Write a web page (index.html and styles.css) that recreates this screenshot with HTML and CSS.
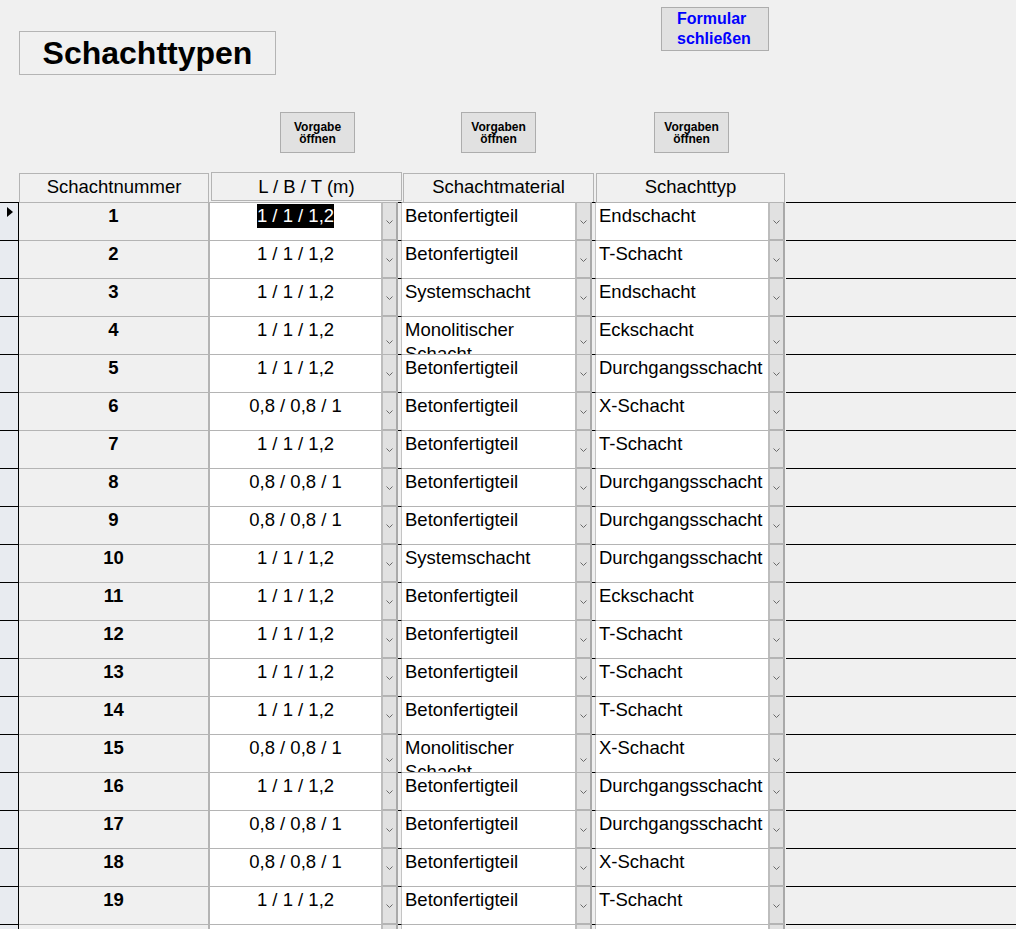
FILE: index.html
```html
<!DOCTYPE html>
<html lang="de">
<head>
<meta charset="utf-8">
<title>Schachttypen</title>
<link rel="stylesheet" href="styles.css">
</head>
<body>
<div class="topbar">
  <div class="title">Schachttypen</div>
  <div class="close-btn">Formular<br>schließen</div>
</div>
<div class="btnrow">
  <div class="vbtn"><span>Vorgabe</span><span>öffnen</span></div>
  <div class="vbtn vbtn-mat"><span>Vorgaben</span><span>öffnen</span></div>
  <div class="vbtn vbtn-typ"><span>Vorgaben</span><span>öffnen</span></div>
</div>
<div class="hdr">
  <div class="h h-num">Schachtnummer</div>
  <div class="h h-lbt">L / B / T (m)</div>
  <div class="h h-mat">Schachtmaterial</div>
  <div class="h h-typ">Schachttyp</div>
</div>

<div class="row">
  <div class="sel"><svg class="cur" width="6" height="10" viewBox="0 0 6 10"><polygon points="0,0 6,5 0,10" fill="#000"/></svg></div>
  <div class="num">1</div>
  <div class="combo"><div class="txt c"><span class="hl">1 / 1 / 1,2</span></div><div class="dd"><svg width="7" height="4"><polyline points="0.5,0.5 3.5,3.5 6.5,0.5" fill="none" stroke="#6a6a6a"/></svg></div><div class="gap"></div></div>
  <div class="combo"><div class="txt">Betonfertigteil</div><div class="dd"><svg width="7" height="4"><polyline points="0.5,0.5 3.5,3.5 6.5,0.5" fill="none" stroke="#6a6a6a"/></svg></div><div class="gap"></div></div>
  <div class="combo"><div class="txt">Endschacht</div><div class="dd"><svg width="7" height="4"><polyline points="0.5,0.5 3.5,3.5 6.5,0.5" fill="none" stroke="#6a6a6a"/></svg></div></div>
  <div class="rest"></div>
</div>
<div class="row">
  <div class="sel"></div>
  <div class="num">2</div>
  <div class="combo"><div class="txt c">1 / 1 / 1,2</div><div class="dd"><svg width="7" height="4"><polyline points="0.5,0.5 3.5,3.5 6.5,0.5" fill="none" stroke="#6a6a6a"/></svg></div><div class="gap"></div></div>
  <div class="combo"><div class="txt">Betonfertigteil</div><div class="dd"><svg width="7" height="4"><polyline points="0.5,0.5 3.5,3.5 6.5,0.5" fill="none" stroke="#6a6a6a"/></svg></div><div class="gap"></div></div>
  <div class="combo"><div class="txt">T-Schacht</div><div class="dd"><svg width="7" height="4"><polyline points="0.5,0.5 3.5,3.5 6.5,0.5" fill="none" stroke="#6a6a6a"/></svg></div></div>
  <div class="rest"></div>
</div>
<div class="row">
  <div class="sel"></div>
  <div class="num">3</div>
  <div class="combo"><div class="txt c">1 / 1 / 1,2</div><div class="dd"><svg width="7" height="4"><polyline points="0.5,0.5 3.5,3.5 6.5,0.5" fill="none" stroke="#6a6a6a"/></svg></div><div class="gap"></div></div>
  <div class="combo"><div class="txt">Systemschacht</div><div class="dd"><svg width="7" height="4"><polyline points="0.5,0.5 3.5,3.5 6.5,0.5" fill="none" stroke="#6a6a6a"/></svg></div><div class="gap"></div></div>
  <div class="combo"><div class="txt">Endschacht</div><div class="dd"><svg width="7" height="4"><polyline points="0.5,0.5 3.5,3.5 6.5,0.5" fill="none" stroke="#6a6a6a"/></svg></div></div>
  <div class="rest"></div>
</div>
<div class="row">
  <div class="sel"></div>
  <div class="num">4</div>
  <div class="combo"><div class="txt c">1 / 1 / 1,2</div><div class="dd"><svg width="7" height="4"><polyline points="0.5,0.5 3.5,3.5 6.5,0.5" fill="none" stroke="#6a6a6a"/></svg></div><div class="gap"></div></div>
  <div class="combo"><div class="txt">Monolitischer Schacht</div><div class="dd"><svg width="7" height="4"><polyline points="0.5,0.5 3.5,3.5 6.5,0.5" fill="none" stroke="#6a6a6a"/></svg></div><div class="gap"></div></div>
  <div class="combo"><div class="txt">Eckschacht</div><div class="dd"><svg width="7" height="4"><polyline points="0.5,0.5 3.5,3.5 6.5,0.5" fill="none" stroke="#6a6a6a"/></svg></div></div>
  <div class="rest"></div>
</div>
<div class="row">
  <div class="sel"></div>
  <div class="num">5</div>
  <div class="combo"><div class="txt c">1 / 1 / 1,2</div><div class="dd"><svg width="7" height="4"><polyline points="0.5,0.5 3.5,3.5 6.5,0.5" fill="none" stroke="#6a6a6a"/></svg></div><div class="gap"></div></div>
  <div class="combo"><div class="txt">Betonfertigteil</div><div class="dd"><svg width="7" height="4"><polyline points="0.5,0.5 3.5,3.5 6.5,0.5" fill="none" stroke="#6a6a6a"/></svg></div><div class="gap"></div></div>
  <div class="combo"><div class="txt">Durchgangsschacht</div><div class="dd"><svg width="7" height="4"><polyline points="0.5,0.5 3.5,3.5 6.5,0.5" fill="none" stroke="#6a6a6a"/></svg></div></div>
  <div class="rest"></div>
</div>
<div class="row">
  <div class="sel"></div>
  <div class="num">6</div>
  <div class="combo"><div class="txt c">0,8 / 0,8 / 1</div><div class="dd"><svg width="7" height="4"><polyline points="0.5,0.5 3.5,3.5 6.5,0.5" fill="none" stroke="#6a6a6a"/></svg></div><div class="gap"></div></div>
  <div class="combo"><div class="txt">Betonfertigteil</div><div class="dd"><svg width="7" height="4"><polyline points="0.5,0.5 3.5,3.5 6.5,0.5" fill="none" stroke="#6a6a6a"/></svg></div><div class="gap"></div></div>
  <div class="combo"><div class="txt">X-Schacht</div><div class="dd"><svg width="7" height="4"><polyline points="0.5,0.5 3.5,3.5 6.5,0.5" fill="none" stroke="#6a6a6a"/></svg></div></div>
  <div class="rest"></div>
</div>
<div class="row">
  <div class="sel"></div>
  <div class="num">7</div>
  <div class="combo"><div class="txt c">1 / 1 / 1,2</div><div class="dd"><svg width="7" height="4"><polyline points="0.5,0.5 3.5,3.5 6.5,0.5" fill="none" stroke="#6a6a6a"/></svg></div><div class="gap"></div></div>
  <div class="combo"><div class="txt">Betonfertigteil</div><div class="dd"><svg width="7" height="4"><polyline points="0.5,0.5 3.5,3.5 6.5,0.5" fill="none" stroke="#6a6a6a"/></svg></div><div class="gap"></div></div>
  <div class="combo"><div class="txt">T-Schacht</div><div class="dd"><svg width="7" height="4"><polyline points="0.5,0.5 3.5,3.5 6.5,0.5" fill="none" stroke="#6a6a6a"/></svg></div></div>
  <div class="rest"></div>
</div>
<div class="row">
  <div class="sel"></div>
  <div class="num">8</div>
  <div class="combo"><div class="txt c">0,8 / 0,8 / 1</div><div class="dd"><svg width="7" height="4"><polyline points="0.5,0.5 3.5,3.5 6.5,0.5" fill="none" stroke="#6a6a6a"/></svg></div><div class="gap"></div></div>
  <div class="combo"><div class="txt">Betonfertigteil</div><div class="dd"><svg width="7" height="4"><polyline points="0.5,0.5 3.5,3.5 6.5,0.5" fill="none" stroke="#6a6a6a"/></svg></div><div class="gap"></div></div>
  <div class="combo"><div class="txt">Durchgangsschacht</div><div class="dd"><svg width="7" height="4"><polyline points="0.5,0.5 3.5,3.5 6.5,0.5" fill="none" stroke="#6a6a6a"/></svg></div></div>
  <div class="rest"></div>
</div>
<div class="row">
  <div class="sel"></div>
  <div class="num">9</div>
  <div class="combo"><div class="txt c">0,8 / 0,8 / 1</div><div class="dd"><svg width="7" height="4"><polyline points="0.5,0.5 3.5,3.5 6.5,0.5" fill="none" stroke="#6a6a6a"/></svg></div><div class="gap"></div></div>
  <div class="combo"><div class="txt">Betonfertigteil</div><div class="dd"><svg width="7" height="4"><polyline points="0.5,0.5 3.5,3.5 6.5,0.5" fill="none" stroke="#6a6a6a"/></svg></div><div class="gap"></div></div>
  <div class="combo"><div class="txt">Durchgangsschacht</div><div class="dd"><svg width="7" height="4"><polyline points="0.5,0.5 3.5,3.5 6.5,0.5" fill="none" stroke="#6a6a6a"/></svg></div></div>
  <div class="rest"></div>
</div>
<div class="row">
  <div class="sel"></div>
  <div class="num">10</div>
  <div class="combo"><div class="txt c">1 / 1 / 1,2</div><div class="dd"><svg width="7" height="4"><polyline points="0.5,0.5 3.5,3.5 6.5,0.5" fill="none" stroke="#6a6a6a"/></svg></div><div class="gap"></div></div>
  <div class="combo"><div class="txt">Systemschacht</div><div class="dd"><svg width="7" height="4"><polyline points="0.5,0.5 3.5,3.5 6.5,0.5" fill="none" stroke="#6a6a6a"/></svg></div><div class="gap"></div></div>
  <div class="combo"><div class="txt">Durchgangsschacht</div><div class="dd"><svg width="7" height="4"><polyline points="0.5,0.5 3.5,3.5 6.5,0.5" fill="none" stroke="#6a6a6a"/></svg></div></div>
  <div class="rest"></div>
</div>
<div class="row">
  <div class="sel"></div>
  <div class="num">11</div>
  <div class="combo"><div class="txt c">1 / 1 / 1,2</div><div class="dd"><svg width="7" height="4"><polyline points="0.5,0.5 3.5,3.5 6.5,0.5" fill="none" stroke="#6a6a6a"/></svg></div><div class="gap"></div></div>
  <div class="combo"><div class="txt">Betonfertigteil</div><div class="dd"><svg width="7" height="4"><polyline points="0.5,0.5 3.5,3.5 6.5,0.5" fill="none" stroke="#6a6a6a"/></svg></div><div class="gap"></div></div>
  <div class="combo"><div class="txt">Eckschacht</div><div class="dd"><svg width="7" height="4"><polyline points="0.5,0.5 3.5,3.5 6.5,0.5" fill="none" stroke="#6a6a6a"/></svg></div></div>
  <div class="rest"></div>
</div>
<div class="row">
  <div class="sel"></div>
  <div class="num">12</div>
  <div class="combo"><div class="txt c">1 / 1 / 1,2</div><div class="dd"><svg width="7" height="4"><polyline points="0.5,0.5 3.5,3.5 6.5,0.5" fill="none" stroke="#6a6a6a"/></svg></div><div class="gap"></div></div>
  <div class="combo"><div class="txt">Betonfertigteil</div><div class="dd"><svg width="7" height="4"><polyline points="0.5,0.5 3.5,3.5 6.5,0.5" fill="none" stroke="#6a6a6a"/></svg></div><div class="gap"></div></div>
  <div class="combo"><div class="txt">T-Schacht</div><div class="dd"><svg width="7" height="4"><polyline points="0.5,0.5 3.5,3.5 6.5,0.5" fill="none" stroke="#6a6a6a"/></svg></div></div>
  <div class="rest"></div>
</div>
<div class="row">
  <div class="sel"></div>
  <div class="num">13</div>
  <div class="combo"><div class="txt c">1 / 1 / 1,2</div><div class="dd"><svg width="7" height="4"><polyline points="0.5,0.5 3.5,3.5 6.5,0.5" fill="none" stroke="#6a6a6a"/></svg></div><div class="gap"></div></div>
  <div class="combo"><div class="txt">Betonfertigteil</div><div class="dd"><svg width="7" height="4"><polyline points="0.5,0.5 3.5,3.5 6.5,0.5" fill="none" stroke="#6a6a6a"/></svg></div><div class="gap"></div></div>
  <div class="combo"><div class="txt">T-Schacht</div><div class="dd"><svg width="7" height="4"><polyline points="0.5,0.5 3.5,3.5 6.5,0.5" fill="none" stroke="#6a6a6a"/></svg></div></div>
  <div class="rest"></div>
</div>
<div class="row">
  <div class="sel"></div>
  <div class="num">14</div>
  <div class="combo"><div class="txt c">1 / 1 / 1,2</div><div class="dd"><svg width="7" height="4"><polyline points="0.5,0.5 3.5,3.5 6.5,0.5" fill="none" stroke="#6a6a6a"/></svg></div><div class="gap"></div></div>
  <div class="combo"><div class="txt">Betonfertigteil</div><div class="dd"><svg width="7" height="4"><polyline points="0.5,0.5 3.5,3.5 6.5,0.5" fill="none" stroke="#6a6a6a"/></svg></div><div class="gap"></div></div>
  <div class="combo"><div class="txt">T-Schacht</div><div class="dd"><svg width="7" height="4"><polyline points="0.5,0.5 3.5,3.5 6.5,0.5" fill="none" stroke="#6a6a6a"/></svg></div></div>
  <div class="rest"></div>
</div>
<div class="row">
  <div class="sel"></div>
  <div class="num">15</div>
  <div class="combo"><div class="txt c">0,8 / 0,8 / 1</div><div class="dd"><svg width="7" height="4"><polyline points="0.5,0.5 3.5,3.5 6.5,0.5" fill="none" stroke="#6a6a6a"/></svg></div><div class="gap"></div></div>
  <div class="combo"><div class="txt">Monolitischer Schacht</div><div class="dd"><svg width="7" height="4"><polyline points="0.5,0.5 3.5,3.5 6.5,0.5" fill="none" stroke="#6a6a6a"/></svg></div><div class="gap"></div></div>
  <div class="combo"><div class="txt">X-Schacht</div><div class="dd"><svg width="7" height="4"><polyline points="0.5,0.5 3.5,3.5 6.5,0.5" fill="none" stroke="#6a6a6a"/></svg></div></div>
  <div class="rest"></div>
</div>
<div class="row">
  <div class="sel"></div>
  <div class="num">16</div>
  <div class="combo"><div class="txt c">1 / 1 / 1,2</div><div class="dd"><svg width="7" height="4"><polyline points="0.5,0.5 3.5,3.5 6.5,0.5" fill="none" stroke="#6a6a6a"/></svg></div><div class="gap"></div></div>
  <div class="combo"><div class="txt">Betonfertigteil</div><div class="dd"><svg width="7" height="4"><polyline points="0.5,0.5 3.5,3.5 6.5,0.5" fill="none" stroke="#6a6a6a"/></svg></div><div class="gap"></div></div>
  <div class="combo"><div class="txt">Durchgangsschacht</div><div class="dd"><svg width="7" height="4"><polyline points="0.5,0.5 3.5,3.5 6.5,0.5" fill="none" stroke="#6a6a6a"/></svg></div></div>
  <div class="rest"></div>
</div>
<div class="row">
  <div class="sel"></div>
  <div class="num">17</div>
  <div class="combo"><div class="txt c">0,8 / 0,8 / 1</div><div class="dd"><svg width="7" height="4"><polyline points="0.5,0.5 3.5,3.5 6.5,0.5" fill="none" stroke="#6a6a6a"/></svg></div><div class="gap"></div></div>
  <div class="combo"><div class="txt">Betonfertigteil</div><div class="dd"><svg width="7" height="4"><polyline points="0.5,0.5 3.5,3.5 6.5,0.5" fill="none" stroke="#6a6a6a"/></svg></div><div class="gap"></div></div>
  <div class="combo"><div class="txt">Durchgangsschacht</div><div class="dd"><svg width="7" height="4"><polyline points="0.5,0.5 3.5,3.5 6.5,0.5" fill="none" stroke="#6a6a6a"/></svg></div></div>
  <div class="rest"></div>
</div>
<div class="row">
  <div class="sel"></div>
  <div class="num">18</div>
  <div class="combo"><div class="txt c">0,8 / 0,8 / 1</div><div class="dd"><svg width="7" height="4"><polyline points="0.5,0.5 3.5,3.5 6.5,0.5" fill="none" stroke="#6a6a6a"/></svg></div><div class="gap"></div></div>
  <div class="combo"><div class="txt">Betonfertigteil</div><div class="dd"><svg width="7" height="4"><polyline points="0.5,0.5 3.5,3.5 6.5,0.5" fill="none" stroke="#6a6a6a"/></svg></div><div class="gap"></div></div>
  <div class="combo"><div class="txt">X-Schacht</div><div class="dd"><svg width="7" height="4"><polyline points="0.5,0.5 3.5,3.5 6.5,0.5" fill="none" stroke="#6a6a6a"/></svg></div></div>
  <div class="rest"></div>
</div>
<div class="row">
  <div class="sel"></div>
  <div class="num">19</div>
  <div class="combo"><div class="txt c">1 / 1 / 1,2</div><div class="dd"><svg width="7" height="4"><polyline points="0.5,0.5 3.5,3.5 6.5,0.5" fill="none" stroke="#6a6a6a"/></svg></div><div class="gap"></div></div>
  <div class="combo"><div class="txt">Betonfertigteil</div><div class="dd"><svg width="7" height="4"><polyline points="0.5,0.5 3.5,3.5 6.5,0.5" fill="none" stroke="#6a6a6a"/></svg></div><div class="gap"></div></div>
  <div class="combo"><div class="txt">T-Schacht</div><div class="dd"><svg width="7" height="4"><polyline points="0.5,0.5 3.5,3.5 6.5,0.5" fill="none" stroke="#6a6a6a"/></svg></div></div>
  <div class="rest"></div>
</div>
<div class="row">
  <div class="sel"></div>
  <div class="num"></div>
  <div class="combo"><div class="txt c"></div><div class="dd"></div><div class="gap"></div></div>
  <div class="combo"><div class="txt"></div><div class="dd"></div><div class="gap"></div></div>
  <div class="combo"><div class="txt"></div><div class="dd"></div></div>
  <div class="rest"></div>
</div>
</body>
</html>
```

FILE: styles.css
```css
html, body {
  margin: 0;
  padding: 0;
}
body {
  background: #f0f0f0;
  font-family: "Liberation Sans", Arial, sans-serif;
  color: #000;
  height: 929px;
  overflow: hidden;
}

/* top area */
.topbar {
  display: flex;
  align-items: flex-start;
  height: 112px;
}
.title {
  margin: 31px 0 0 19px;
  width: 257px;
  height: 44px;
  box-sizing: border-box;
  border: 1px solid #b4b4b4;
  font-weight: bold;
  font-size: 32px;
  line-height: 42px;
  text-align: center;
}
.close-btn {
  margin: 7px 0 0 385px;
  width: 108px;
  height: 44px;
  box-sizing: border-box;
  border: 1px solid #adadad;
  background: #e1e1e1;
  color: #0000ff;
  font-weight: bold;
  font-size: 16px;
  line-height: 20px;
  padding: 1px 0 0 15px;
}

.btnrow {
  display: flex;
  align-items: flex-start;
  height: 60px;
  padding-left: 280px;
}
.vbtn {
  width: 75px;
  height: 41px;
  box-sizing: border-box;
  border: 1px solid #adadad;
  background: #e1e1e1;
  font-weight: bold;
  font-size: 12px;
  line-height: 12px;
  display: flex;
  flex-direction: column;
  justify-content: center;
  align-items: center;
  text-align: center;
}
.vbtn-mat { margin-left: 106px; }
.vbtn-typ { margin-left: 118px; }

/* header */
.hdr, .row {
  display: grid;
  grid-template-columns: 19px 191px 192px 194px 189px 1fr;
}
.hdr {
  height: 30px;
}
.h {
  box-sizing: border-box;
  border: 1px solid #b4b4b4;
  border-bottom: none;
  font-size: 18.5px;
  line-height: 26px;
  text-align: center;
  white-space: nowrap;
}
.h-num { grid-column: 2; margin: 1px 1px 0 0; }
.h-lbt { grid-column: 3; margin: 0 0 1px 1px; border-bottom: 1px solid #b4b4b4; line-height: 27px; }
.h-mat { grid-column: 4; margin: 1px 2px 0 1px; }
.h-typ { grid-column: 5; margin: 1px 0 0 0; }

/* rows */
.row {
  height: 38px;
  font-size: 18.5px;
}
.sel {
  box-sizing: border-box;
  border-top: 1px solid #000;
  border-right: 1px solid #000;
  background: #e8ebf0;
}
.cur {
  display: block;
  margin: 4px 0 0 7px;
}
.num {
  box-sizing: border-box;
  border-top: 1px solid #b4b4b4;
  border-right: 2px solid #b4b4b4;
  font-weight: bold;
  text-align: center;
  padding-top: 1px;
  line-height: 24px;
}
.combo {
  display: flex;
  min-width: 0;
}
.txt {
  flex: 1;
  min-width: 0;
  box-sizing: border-box;
  background: #fff;
  border-top: 1px solid #b4b4b4;
  overflow: hidden;
  padding: 1px 0 0 3px;
  line-height: 24px;
}
.txt.c {
  text-align: center;
  padding-left: 0;
}
.hl {
  display: inline-block;
  background: #000;
  color: #fff;
  line-height: 24px;
}
.dd {
  width: 17px;
  flex: none;
  box-sizing: border-box;
  background: #e1e1e1;
  border-top: 1px solid #b4b4b4;
  border-left: 2px solid #bdbdbd;
  border-right: 2px solid #a9a9a9;
  border-bottom: 1px solid #b4b4b4;
  display: flex;
  align-items: center;
  justify-content: center;
}
.dd svg {
  display: block;
  margin-top: 1px;
}
.gap {
  width: 4px;
  flex: none;
  box-sizing: border-box;
  border-top: 1px solid #000;
  border-right: 1px solid #c4c4c4;
}
.rest {
  border-top: 1px solid #000;
  margin-left: 1px;
}
```
